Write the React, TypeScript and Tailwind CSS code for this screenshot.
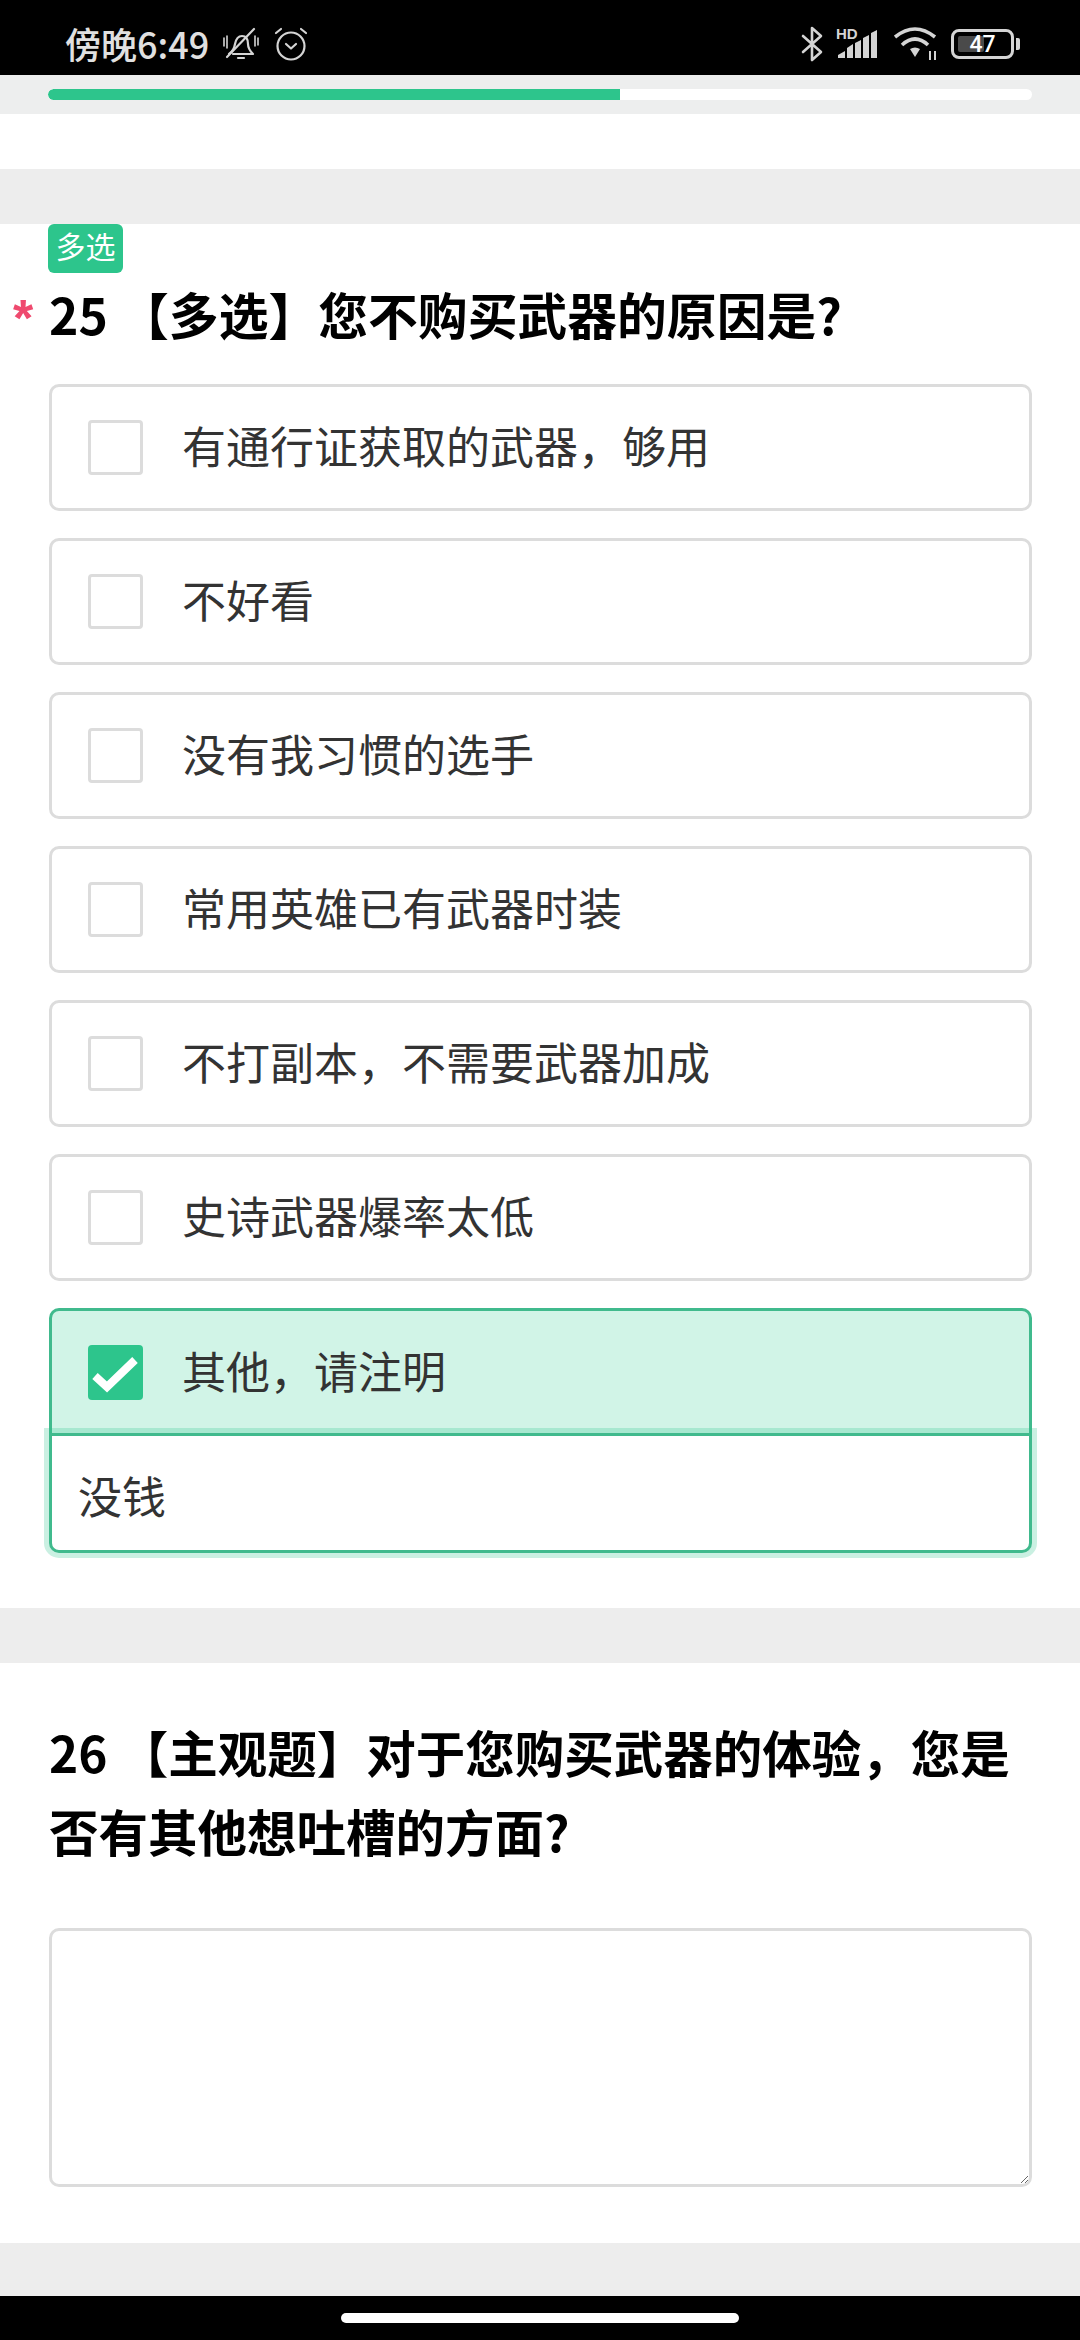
const cjk = "font-['Noto_Sans_CJK_SC','Noto_Sans',sans-serif]";

const options = [
  '有通行证获取的武器\uFF0C够用',
  '不好看',
  '没有我习惯的选手',
  '常用英雄已有武器时装',
  '不打副本\uFF0C不需要武器加成',
  '史诗武器爆率太低',
];

function BellOffIcon() {
  return (
    <svg width="36" height="36" viewBox="0 0 36 36" fill="none" stroke="#d4d4d4" strokeWidth="2.2" strokeLinecap="round" strokeLinejoin="round">
      <path d="M6 28c3-2 5-4 6-10 1-5 3-8 7-8s6 3 6 8c0 4 2 7 5 10H10" />
      <path d="M4 31 31 3" />
      <path d="M15 32h6" />
      <path d="M1 12v8M4 10v12M32 10v10M35 12v7" strokeWidth="1.6" />
    </svg>
  );
}

function AlarmIcon() {
  return (
    <svg width="36" height="36" viewBox="0 0 36 36" fill="none" stroke="#d4d4d4" strokeWidth="2.2" strokeLinecap="round" strokeLinejoin="round">
      <circle cx="18" cy="20" r="13.5" />
      <path d="M13 18l5 4.5 5-4.5" />
      <path d="M3 7l5-4M33 7l-5-4" />
    </svg>
  );
}

function BluetoothIcon() {
  return (
    <svg width="22" height="36" viewBox="0 0 22 36" fill="none" stroke="#d4d4d4" strokeWidth="2.6" strokeLinejoin="round" strokeLinecap="round">
      <path d="M2 10l18 16-9 8V2l9 8L2 26" />
    </svg>
  );
}

function SignalIcon() {
  return (
    <div className="relative w-[42px] h-[30px]">
      <span className="absolute left-0 top-[-2px] text-[15px] leading-[14px] font-bold text-[#d4d4d4] font-['Liberation_Sans',sans-serif]">HD</span>
      <svg className="absolute inset-0" width="42" height="30" viewBox="0 0 42 30" fill="#d4d4d4">
        <path d="M2 29v-3l7-4v7zM11 29V19l6-4v14zM19 29V14l6-3v18zM27 29V9l6-3v23zM35 29V4l6-3v28z" />
      </svg>
    </div>
  );
}

function WifiIcon() {
  return (
    <svg className="ml-[3px]" width="44" height="36" viewBox="0 0 44 36" fill="none" stroke="#d4d4d4" strokeWidth="3.6">
      <path d="M1 11Q21-5 41 11" />
      <path d="M8 19Q21 7 34 19" />
      <path d="M16 23q5-3 10 0l-5 8z" fill="#d4d4d4" stroke="none" />
      <path d="M36 25v9M41 25v9" strokeWidth="2" />
    </svg>
  );
}

function BatteryIcon() {
  return (
    <div className="flex items-center gap-[2px]">
      <div className="relative w-[63px] h-[30px] rounded-[8px] border-[3px] border-[#d4d4d4] flex items-center justify-center">
        <div className="absolute left-[4px] top-[4px] bottom-[4px] w-[26px] rounded-[2px] bg-[#4a4a4a]" />
        <span className="relative text-[23px] leading-none font-medium text-white font-['Roboto',sans-serif]">47</span>
      </div>
      <div className="w-[4px] h-[12px] rounded-r-[2px] bg-[#d4d4d4]" />
    </div>
  );
}

function StatusBar() {
  return (
    <div className="h-[75px] bg-black flex items-center justify-between pl-[65px] pr-[60px] pt-[13px]">
      <div className="flex items-center gap-[14px]">
        <span className={`${cjk} text-[36px] leading-none font-medium text-[#e0e0e0] pb-[3px]`}>傍晚6:49</span>
        <BellOffIcon />
        <AlarmIcon />
      </div>
      <div className="flex items-center gap-[13px]">
        <BluetoothIcon />
        <SignalIcon />
        <WifiIcon />
        <BatteryIcon />
      </div>
    </div>
  );
}

function ProgressBar() {
  return (
    <div className="h-[39px] bg-[#edeeee] px-[48px] pt-[14px]">
      <div className="h-[11px] rounded-full bg-white overflow-hidden">
        <div className="h-full w-[572px] rounded-l-full bg-[#2dc58c]" />
      </div>
    </div>
  );
}

function CheckBox({ checked }: { checked?: boolean }) {
  if (checked) {
    return (
      <div className="w-[55px] h-[55px] shrink-0 rounded-[4px] bg-[#2dc58c]">
        <svg width="55" height="55" viewBox="0 0 55 55" fill="none" stroke="white" strokeWidth="8">
          <path d="M7 31l12 11L47 15" />
        </svg>
      </div>
    );
  }
  return <div className="w-[55px] h-[55px] shrink-0 rounded-[4px] border-[3px] border-[#dcdcdc] bg-white" />;
}

function Option({ label }: { label: string }) {
  return (
    <div className="h-[127px] rounded-[10px] border-[3px] border-[#dcdcdc] bg-white flex items-center pl-[36px] gap-[39px]">
      <CheckBox />
      <span className="text-[44px] leading-none text-[#333] pb-[5px]">{label}</span>
    </div>
  );
}

export default function App() {
  return (
    <div className={`${cjk} w-[1080px] h-[2340px] bg-white flex flex-col overflow-hidden`}>
      <StatusBar />
      <ProgressBar />
      <div className="h-[55px] bg-white" />
      <div className="h-[55px] bg-[#ededed]" />

      {/* Question 25 */}
      <div className="h-[1384px] pl-[49px] pr-[48px] bg-white">
        <div className="w-[75px] h-[49px] ml-[-1px] pb-[7px] rounded-[6px] bg-[#2dc58c] flex items-center justify-center text-[30px] leading-none text-white">多选</div>
        <div className="relative mt-[13px] h-[60px] pb-[5px] flex items-center text-[49.8px] font-bold leading-none text-black whitespace-pre">
          <span className="absolute left-[-36px] top-[6px] text-[#ef4a6f] text-[52px] font-bold leading-none font-['Liberation_Sans',sans-serif]">*</span>
          <span>25 【多选】您不购买武器的原因是?</span>
        </div>
        <div className="mt-[38px] flex flex-col gap-[27px]">
          {options.map((o) => (
            <Option key={o} label={o} />
          ))}
          <div className="relative">
            <div className="h-[125px] rounded-t-[10px] border-[3px] border-b-0 border-[#40ba8d] bg-[#d1f4e7] flex items-center pl-[36px] gap-[39px]">
              <CheckBox checked />
              <span className="text-[44px] leading-none text-[#333] pb-[5px]">{'其他\uFF0C请注明'}</span>
            </div>
            <input
              defaultValue="没钱"
              className="block w-full h-[120px] rounded-b-[10px] border-[3px] border-[#40ba8d] bg-white pl-[26px] pt-[4px] text-[44px] text-[#333] outline-none shadow-[0_0_0_5px_rgba(45,197,140,0.25)]"
            />
          </div>
        </div>
      </div>

      <div className="h-[55px] shrink-0 bg-[#ededed]" />

      {/* Question 26 */}
      <div className="h-[580px] shrink-0 pl-[49px] pr-[48px] pt-[49px] bg-white">
        <div className="text-[49.5px] font-bold leading-[79px] text-black">
          {'26 【主观题】对于您购买武器的体验\uFF0C您是否有其他想吐槽的方面?'}
        </div>
        <textarea className="block mt-[58px] w-full h-[259px] rounded-[10px] border-[3px] border-[#dcdcdc] bg-white outline-none" />
      </div>

      <div className="h-[53px] shrink-0 bg-[#ededed]" />
      <div className="h-[44px] shrink-0 bg-black flex items-center justify-center">
        <div className="w-[398px] h-[10px] rounded-full bg-white" />
      </div>
    </div>
  );
}
